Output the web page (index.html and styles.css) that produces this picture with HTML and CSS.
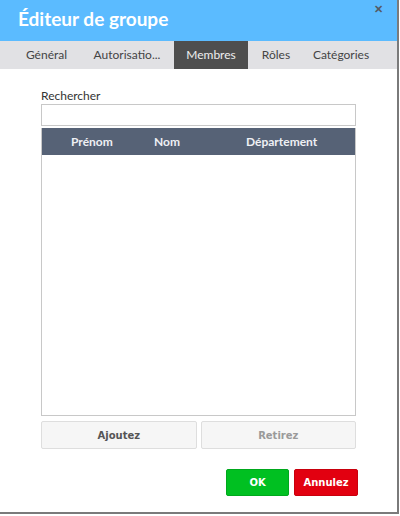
FILE: index.html
```html
<!DOCTYPE html>
<html lang="fr">
<head>
    <meta charset="UTF-8">
    <meta name="viewport" content="width=device-width, initial-scale=1.0">
    <title>Éditeur de groupe</title>
    <link rel="stylesheet" href="styles.css">
</head>
<body>
    <div class="dialog">
        <div class="dialog-header">
            <h1>Éditeur de groupe</h1>
            <span class="close">&#x2715;</span>
        </div>

        <div class="tabs">
            <span class="tab tab-general">Général</span>
            <span class="tab tab-rights">Autorisatio...</span>
            <span class="tab tab-members active">Membres</span>
            <span class="tab tab-roles">Rôles</span>
            <span class="tab tab-categories">Catégories</span>
        </div>

        <div class="content">
            <label for="search">Rechercher</label>
            <input type="text" id="search" class="search">

            <div class="grid">
                <div class="grid-head">
                    <span class="col-first">Prénom</span>
                    <span class="col-last">Nom</span>
                    <span class="col-dept">Département</span>
                </div>
                <div class="grid-body"></div>
            </div>

            <div class="member-actions">
                <button class="btn-light">Ajoutez</button>
                <button class="btn-light" disabled>Retirez</button>
            </div>
        </div>

        <div class="dialog-footer">
            <button class="btn-ok">OK</button>
            <button class="btn-cancel">Annulez</button>
        </div>
    </div>
</body>
</html>
```

FILE: styles.css
```css
body {
    margin: 0;
    background-color: #ffffff;
    font-family: Lato, "Open Sans", sans-serif;
}
.dialog {
    width: 397px;
    height: 512px;
    background-color: #fff;
    border-right: 2px solid #7a7a7a;
    border-bottom: 2px solid #7a7a7a;
    display: flex;
    flex-direction: column;
}
.dialog-header {
    height: 41px;
    background-color: #5bbbff;
    position: relative;
}
.dialog-header h1 {
    margin: 0;
    padding: 5px 0 0 18px;
    font-size: 19px;
    font-weight: 700;
    color: #fff;
    line-height: 28px;
}
.close {
    position: absolute;
    right: 14px;
    top: 2px;
    font-size: 11px;
    font-weight: 700;
    color: #555c66;
}
.tabs {
    height: 28px;
    background-color: #e1e1e4;
    display: flex;
    padding-left: 13px;
}
.tab {
    font-size: 12px;
    color: #444;
    line-height: 27px;
    text-align: center;
}
.tab-general {
    width: 67px;
}
.tab-rights {
    width: 94px;
}
.tab-members {
    width: 74px;
}
.tab-roles {
    width: 56px;
}
.tab-categories {
    width: 74px;
}
.tab.active {
    background-color: #4e4e4e;
    color: #eee;
}
.content {
    padding: 19px 41px 0 41px;
}
.content label {
    display: block;
    font-size: 12px;
    color: #333;
    line-height: 16px;
}
.search {
    display: block;
    box-sizing: border-box;
    width: 100%;
    height: 22px;
    margin: 0;
    border: 1px solid #c8c8c8;
    padding: 0 4px;
}
.grid {
    margin-top: 2px;
    border: 1px solid #c8c8c8;
    border-top: none;
}
.grid-head {
    height: 27px;
    background-color: #566276;
    color: #eef0f4;
    font-size: 12px;
    font-weight: 700;
    display: flex;
    align-items: center;
}
.col-first {
    margin-left: 29px;
    width: 83px;
}
.col-last {
    width: 92px;
}
.col-dept {
    flex: 1;
}
.grid-body {
    height: 260px;
}
.member-actions {
    display: flex;
    gap: 4px;
    margin-top: 5px;
}
.member-actions button {
    flex: 1;
    height: 28px;
}
button {
    font-family: "DejaVu Sans", Verdana, sans-serif;
    font-weight: 700;
    font-size: 10px;
    cursor: pointer;
}
.btn-light {
    background-color: #f6f6f6;
    border: 1px solid #dedede;
    border-radius: 2px;
    color: #555;
}
.btn-light:disabled {
    color: #9a9a9a;
}
.dialog-footer {
    display: flex;
    justify-content: flex-end;
    gap: 5px;
    padding: 20px 39px 0 0;
}
.btn-ok,
.btn-cancel {
    height: 27px;
    border-radius: 2px;
    color: #fff;
}
.btn-ok {
    width: 63px;
    background-color: #00c021;
    border: 1px solid #00a81d;
}
.btn-cancel {
    width: 64px;
    background-color: #e20010;
    border: 1px solid #c8000d;
}
```
